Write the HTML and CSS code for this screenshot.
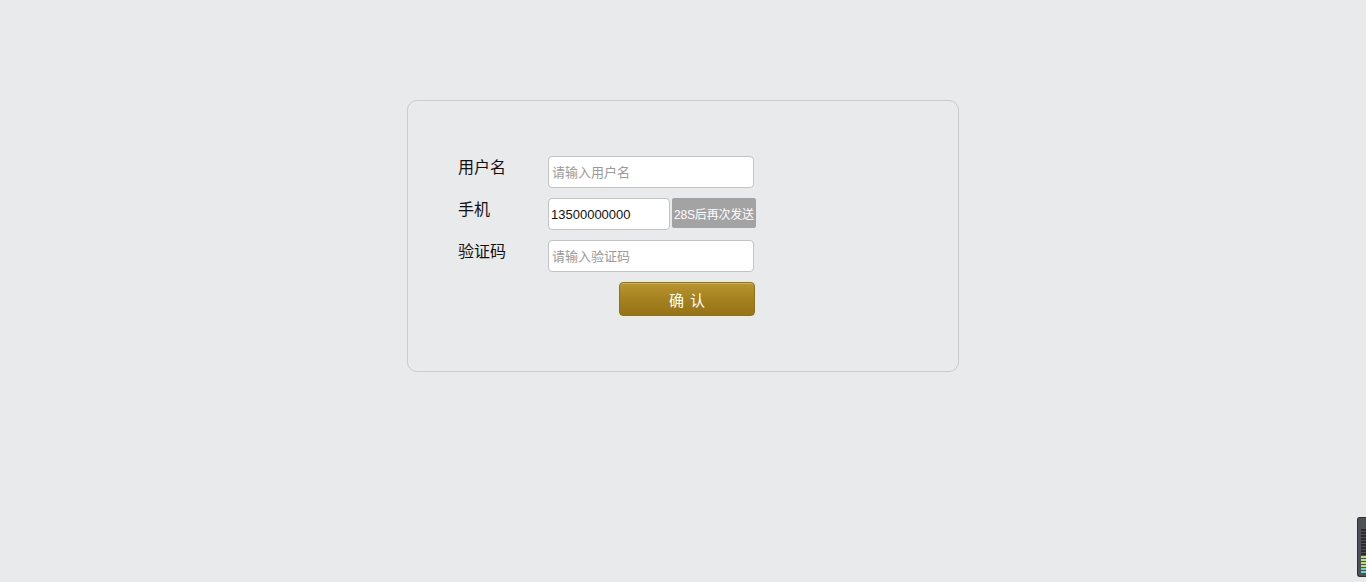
FILE: index.html
```html
<!DOCTYPE html>
<html lang="zh-CN">
<head>
<meta charset="utf-8">
<title>验证</title>
<link rel="stylesheet" href="styles.css">
</head>
<body>
<div class="card">
  <form class="form">
    <div class="row">
      <label class="label">用户名</label>
      <input class="input" type="text" placeholder="请输入用户名">
    </div>
    <div class="row">
      <label class="label">手机</label>
      <input class="input input-phone" type="text" value="13500000000">
      <button type="button" class="send">28S后再次发送</button>
    </div>
    <div class="row">
      <label class="label">验证码</label>
      <input class="input" type="text" placeholder="请输入验证码">
    </div>
    <div class="row row-submit">
      <button type="button" class="submit">确 认</button>
    </div>
  </form>
</div>
<div class="meter">
  <span class="bar"></span><span class="bar"></span><span class="bar"></span><span class="bar"></span>
  <span class="bar"></span><span class="bar"></span><span class="bar"></span><span class="bar"></span>
  <span class="bar"></span><span class="bar on"></span><span class="bar on"></span><span class="bar on"></span>
  <span class="bar on"></span><span class="bar on2"></span><span class="bar on2"></span>
</div>
</body>
</html>
```
FILE: styles.css
```css
html, body {
  margin: 0;
  padding: 0;
  background: #e9eaec;
  font-family: "Liberation Sans", Arial, "Noto Sans CJK SC", sans-serif;
  color: #111;
}
.card {
  box-sizing: border-box;
  width: 552px;
  height: 272px;
  margin: 100px auto 0;
  border: 1px solid #cbcbcd;
  border-radius: 10px;
  padding: 55px 0 0 50px;
}
.form {
  display: flex;
  flex-direction: column;
  gap: 10px;
}
.row {
  display: flex;
  align-items: flex-start;
  height: 32px;
}
.label {
  width: 90px;
  font-size: 16px;
  line-height: 22px;
  padding-top: 1px;
  color: #111;
}
.input {
  box-sizing: border-box;
  width: 206px;
  height: 32px;
  margin: 0;
  padding: 0 3px;
  border: 1px solid #c3c3c3;
  border-radius: 4px;
  background: #fff;
  font-family: "Liberation Sans", Arial, "Noto Sans CJK SC", sans-serif;
  font-size: 13px;
  color: #111;
  outline: none;
}
.input::placeholder {
  color: #9a9a9a;
  font-size: 13px;
}
.input-phone {
  width: 122px;
  padding: 0 2px;
}
.send {
  box-sizing: border-box;
  width: 84px;
  height: 30px;
  margin: 0 0 0 2px;
  padding: 0;
  border: none;
  border-radius: 2px;
  background: #a3a3a3;
  color: #fff;
  font-family: "Liberation Sans", Arial, "Noto Sans CJK SC", sans-serif;
  font-size: 12px;
  letter-spacing: -0.2px;
  white-space: nowrap;
}
.row-submit {
  padding-left: 161px;
  height: 34px;
}
.submit {
  box-sizing: border-box;
  width: 136px;
  height: 34px;
  margin: 0;
  padding: 0 0 0 1px;
  border: 1px solid #8f7118;
  border-radius: 4px;
  background: linear-gradient(#b89530, #a5821f 50%, #967315);
  box-shadow: inset 0 1px 0 rgba(255, 240, 180, 0.35);
  color: #fff;
  font-family: "Liberation Sans", Arial, "Noto Sans CJK SC", sans-serif;
  font-size: 15px;
  letter-spacing: 1px;
}
.meter {
  position: fixed;
  right: 0;
  bottom: 5px;
  width: 9px;
  height: 60px;
  box-sizing: border-box;
  background: #4e5158;
  border: 1px solid #2e3035;
  border-right: none;
  border-radius: 3px 0 0 3px;
  display: flex;
  flex-direction: column;
  align-items: flex-end;
  justify-content: flex-end;
  gap: 1px;
  padding: 4px 0 3px 2px;
}
.bar {
  display: block;
  width: 5px;
  height: 2px;
  background: #2a2c30;
}
.bar.on {
  background: #b5e06c;
}
.bar.on2 {
  background: #5fd6c4;
}
```
